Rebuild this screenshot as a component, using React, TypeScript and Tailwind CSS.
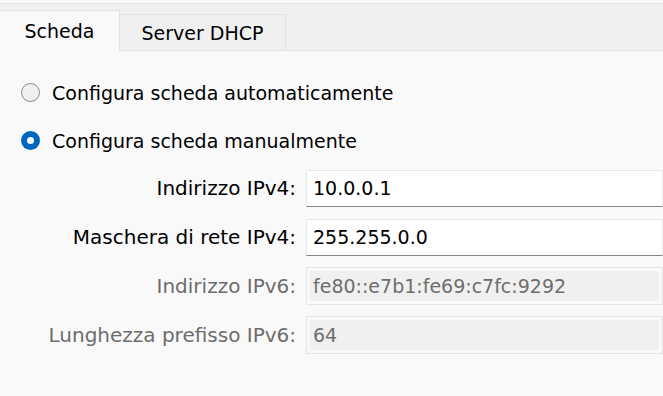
import React from "react";

const font = { fontFamily: '"DejaVu Sans", sans-serif' };

function Row({ label, value, disabled }: { label: string; value: string; disabled?: boolean }) {
  return (
    <div className="flex items-center h-[38px]">
      <div className={`w-[296px] text-right text-[20px] ${disabled ? "text-[#6d6d6d]" : "text-black"}`}>{label}</div>
      {disabled ? (
        <div className="ml-[10px] flex-1 h-[38px] border border-[#e5e5e5] p-[3px]">
          <div className="h-full bg-[#f0f0f0] flex items-center pl-[3px] text-[#6d6d6d]">{value}</div>
        </div>
      ) : (
        <div className="ml-[10px] flex-1 h-[37px] bg-white border border-[#e8e8e8] border-b-[#858585] flex items-center pl-[6px] text-black">
          {value}
        </div>
      )}
    </div>
  );
}

export default function App() {
  return (
    <div className="w-[663px] h-[396px] bg-[#f9f9f9] overflow-hidden text-[19px] leading-[22px]" style={font}>
      <div className="h-[3px] bg-[#f9f9f9]" />
      <div className="h-[48px] bg-[#f0f0f0] border-t border-[#e2e2e2] flex items-end">
        <div className="w-[120px] h-[41px] bg-[#f9f9f9] border-t border-r border-[#e2e2e2] flex items-center justify-center pb-[1px]">
          Scheda
        </div>
        <div className="flex-1 flex flex-col">
          <div className="flex">
            <div className="w-[166px] h-[36px] bg-[#f0f0f0] border-t border-r border-[#e2e2e2] flex items-center justify-center">
              Server DHCP
            </div>
          </div>
          <div className="h-[1px] bg-[#e2e2e2]" />
        </div>
      </div>
      <div className="pl-[21px] pt-[31px] flex flex-col gap-[27px]">
        <div className="flex items-center gap-[12px] h-[21px]">
          <div className="w-[19px] h-[19px] rounded-full border border-[#8a8a8a] bg-[#f0f0f0]" />
          <span>Configura scheda automaticamente</span>
        </div>
        <div className="flex items-center gap-[12px] h-[21px]">
          <div className="w-[19px] h-[19px] rounded-full bg-[#0067c0] flex items-center justify-center">
            <div className="w-[7px] h-[7px] rounded-full bg-white" />
          </div>
          <span>Configura scheda manualmente</span>
        </div>
      </div>
      <div className="mt-[18px] flex flex-col gap-[11px]">
        <Row label="Indirizzo IPv4:" value="10.0.0.1" />
        <Row label="Maschera di rete IPv4:" value="255.255.0.0" />
        <Row label="Indirizzo IPv6:" value="fe80::e7b1:fe69:c7fc:9292" disabled />
        <Row label="Lunghezza prefisso IPv6:" value="64" disabled />
      </div>
    </div>
  );
}
